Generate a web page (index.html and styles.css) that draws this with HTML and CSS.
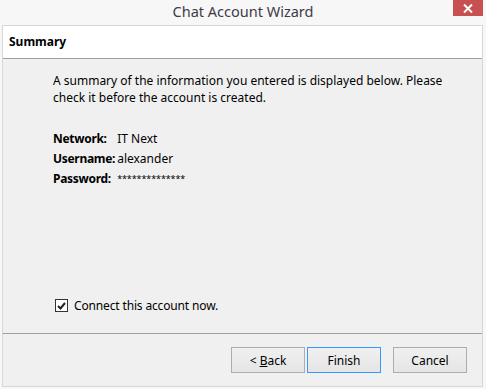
FILE: index.html
```html
<!DOCTYPE html>
<html lang="en">
<head>
    <meta charset="UTF-8">
    <title>Chat Account Wizard</title>
    <link rel="stylesheet" href="styles.css">
</head>
<body>
    <div class="titlebar">
        <span class="title">Chat Account Wizard</span>
        <button class="close-btn" aria-label="Close">
            <svg width="10" height="9" viewBox="0 0 10 9">
                <path d="M1 0.5 L9 8.5 M9 0.5 L1 8.5" stroke="#fff" stroke-width="2"/>
            </svg>
        </button>
    </div>

    <div class="wizard">
        <div class="wizard-header">Summary</div>

        <div class="wizard-body">
            <p class="intro">A summary of the information you entered is displayed below. Please check it before the account is created.</p>

            <div class="summary">
                <span class="label">Network:</span><span class="value">IT Next</span>
                <span class="label">Username:</span><span class="value">alexander</span>
                <span class="label">Password:</span><span class="value stars">**************</span>
            </div>

            <label class="check">
                <span class="box">
                    <svg width="9" height="8" viewBox="0 0 9 8">
                        <path d="M1 4 L3.5 6.5 L8 1" fill="none" stroke="#222" stroke-width="2"/>
                    </svg>
                </span>
                Connect this account now.
            </label>
        </div>

        <div class="wizard-footer">
            <button class="btn"><span>&lt; <u>B</u>ack</span></button>
            <button class="btn btn-default">Finish</button>
            <button class="btn btn-cancel">Cancel</button>
        </div>
    </div>
</body>
</html>
```

FILE: styles.css
```css
* {
    margin: 0;
    padding: 0;
    box-sizing: border-box;
}

body {
    font-family: 'Noto Sans', 'Open Sans', sans-serif;
    font-size: 12px;
    color: #000;
    background: #f7f7f7;
    width: 486px;
    height: 389px;
    overflow: hidden;
}

.titlebar {
    height: 25px;
    display: flex;
    align-items: flex-start;
    justify-content: center;
    position: relative;
}

.title {
    font-size: 14.5px;
    color: #3c3c48;
    line-height: 21px;
    margin-top: 1px;
}

.close-btn {
    position: absolute;
    top: 0;
    right: 3px;
    width: 30px;
    height: 16px;
    border: none;
    background: #c75050;
    display: flex;
    align-items: center;
    justify-content: center;
}

.wizard {
    margin: 0 3px 2px 2px;
    height: 362px;
    border: 1px solid #d7d7d7;
    background: #f0f0f0;
    display: flex;
    flex-direction: column;
}

.wizard-header {
    height: 33px;
    background: #fff;
    border-bottom: 1px solid #a0a0a0;
    font-weight: bold;
    padding: 7px 0 0 6px;
}

.wizard-body {
    flex: 1;
    padding: 13px 20px 0 50px;
    border-bottom: 1px solid #a0a0a0;
}

.intro {
    line-height: 17px;
}

.summary {
    display: grid;
    grid-template-columns: max-content auto;
    column-gap: 2px;
    grid-auto-rows: 20px;
    margin-top: 23px;
    line-height: 20px;
}

.label {
    font-weight: bold;
    letter-spacing: -0.3px;
}

.stars {
    font-size: 9px;
    letter-spacing: -0.1px;
}

.check {
    display: flex;
    align-items: center;
    gap: 6px;
    margin-top: 108px;
    margin-left: 2px;
    letter-spacing: -0.15px;
}

.box {
    width: 13px;
    height: 13px;
    border: 1px solid #333;
    background: #fff;
    display: flex;
    align-items: center;
    justify-content: center;
}

.wizard-footer {
    height: 52px;
    display: flex;
    justify-content: flex-end;
    align-items: flex-start;
    padding: 13px 15px 0 0;
}

.btn {
    font-family: inherit;
    font-size: 12px;
    width: 74px;
    height: 26px;
    border: 1px solid #adadad;
    background: linear-gradient(#f0f0f0, #e5e5e5);
    color: #000;
    margin-left: 2px;
}

.btn-default {
    border-color: #3399ff;
}

.btn-cancel {
    margin-left: 12px;
}
```
